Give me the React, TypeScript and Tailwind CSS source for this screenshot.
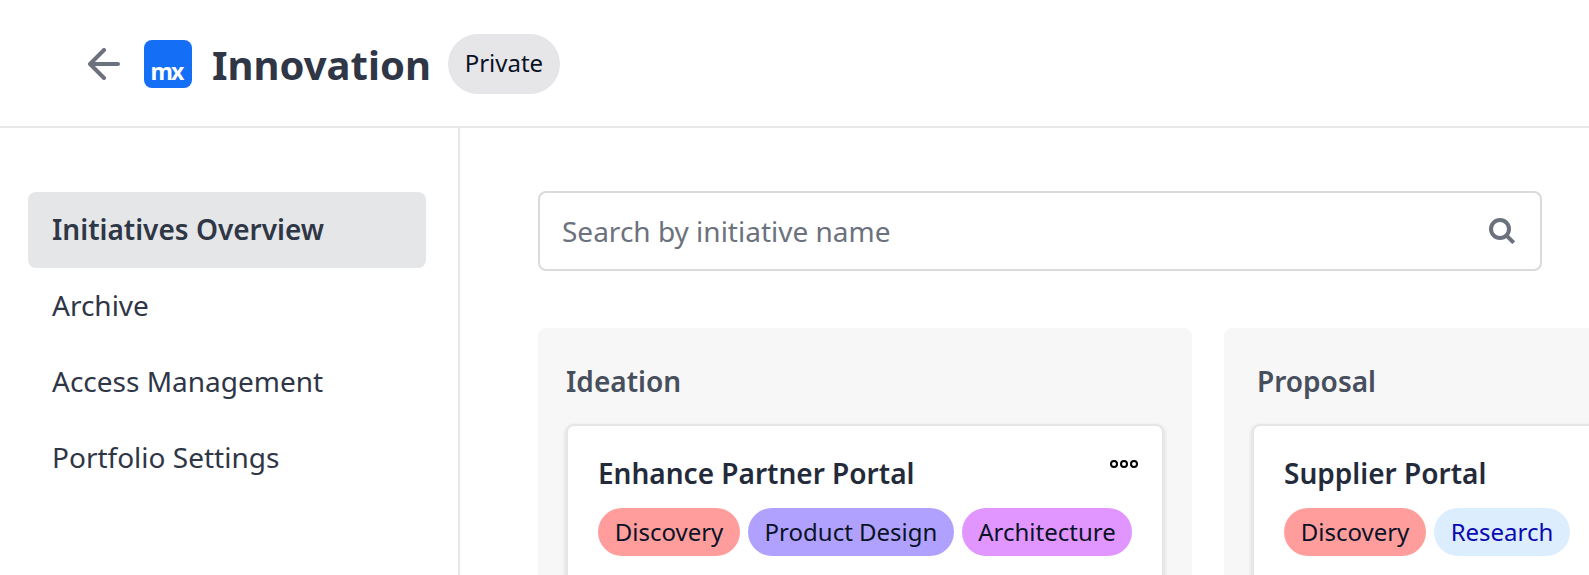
const navItems = ["Initiatives Overview", "Archive", "Access Management", "Portfolio Settings"];

type Tag = { label: string; className: string };

const columns: { name: string; headingClass: string; card: string; menu: boolean; tags: Tag[] }[] = [
  {
    name: "Ideation",
    headingClass: "",
    card: "Enhance Partner Portal",
    menu: true,
    tags: [
      { label: "Discovery", className: "w-[142px] bg-[#ff9d9d] text-[#0a1325]" },
      { label: "Product Design", className: "w-[206px] bg-[#b1a1ff] text-[#0a1325]" },
      { label: "Architecture", className: "w-[170px] bg-[#e195ff] text-[#0a1325]" },
    ],
  },
  {
    name: "Proposal",
    headingClass: "pl-[5px]",
    card: "Supplier Portal",
    menu: false,
    tags: [
      { label: "Discovery", className: "w-[142px] bg-[#ff9d9d] text-[#0a1325]" },
      { label: "Research", className: "w-[136px] bg-[#dcedfe] text-[#0a0ab0]" },
    ],
  },
];

function BackArrow() {
  return (
    <svg width="32" height="32" viewBox="0 0 32 32" fill="none" stroke="#6c717e" strokeWidth="4" strokeLinecap="round" strokeLinejoin="round">
      <path d="M30 16H2M16 2L2 16L16 30" />
    </svg>
  );
}

function SearchIcon() {
  return (
    <svg width="26" height="26" viewBox="0 0 26 26" fill="none" stroke="#6c717e" strokeWidth="4">
      <circle cx="11" cy="11" r="9" />
      <path d="M17.3 17.3L24.7 24.7" />
    </svg>
  );
}

function MoreIcon() {
  return (
    <svg width="28" height="8" viewBox="0 0 28 8" fill="none" stroke="#000" strokeWidth="2">
      <circle cx="4" cy="4" r="3" />
      <circle cx="14" cy="4" r="3" />
      <circle cx="24" cy="4" r="3" />
    </svg>
  );
}

export default function App() {
  return (
    <div className="flex h-[575px] w-full flex-col overflow-hidden bg-white font-['Noto_Sans',sans-serif] text-[28px] text-[#2f3646]">
      <header className="flex h-32 shrink-0 items-center border-b-2 border-[#e6e7e8] pl-[88px] pt-0.5">
        <BackArrow />
        <div className="ml-6 flex size-12 items-end justify-center rounded-lg bg-[#146ff6] pr-[3px] pb-1.5 text-white">
          <span className="text-[23px] leading-[22px] font-bold tracking-[-1.8px]">mx</span>
        </div>
        <h1 className="ml-5 pt-0.5 text-[40px] leading-[56px] font-bold">Innovation</h1>
        <span className="ml-[17px] flex h-[60px] w-28 items-center justify-center rounded-full bg-[#e6e6e8] pb-0.5 text-2xl text-[#0a1325]">
          Private
        </span>
      </header>
      <div className="flex min-h-0 flex-1">
        <nav className="w-[460px] shrink-0 border-r-2 border-[#e6e7e8] pt-16 pr-8 pl-7">
          {navItems.map((item, i) => (
            <div
              key={item}
              className={
                i === 0
                  ? "flex h-[76px] items-center rounded-lg bg-[#e5e6e8] px-6 pb-0.5 font-semibold"
                  : "flex h-[76px] items-center px-6 pb-0.5"
              }
            >
              {item}
            </div>
          ))}
        </nav>
        <main className="w-[1129px] shrink-0 overflow-hidden pt-[63px] pl-[78px]">
          <div className="flex h-20 w-[1004px] items-center justify-between rounded-lg border-2 border-[#d9dadb] pr-[25px] pl-[22px] text-[#6c717e]">
            <span>Search by initiative name</span>
            <SearchIcon />
          </div>
          <div className="mt-[57px] flex gap-8">
            {columns.map((col) => (
              <section key={col.name} className="h-[400px] w-[654px] shrink-0 rounded-lg bg-[#f7f7f7] px-7 pt-8">
                <h2 className={`h-16 text-[28px] leading-[42px] font-semibold text-[#474e5c] ${col.headingClass}`}>{col.name}</h2>
                <article className="h-[300px] w-[598px] rounded-lg border-2 border-[#e6e6e6] bg-white px-[30px] pt-[26px] shadow-[0_2px_4px_rgba(0,0,0,0.16)]">
                  <div className="flex items-start justify-between">
                    <h3 className="h-14 text-[28px] leading-[42px] font-semibold text-[#232a3a]">{col.card}</h3>
                    {col.menu && (
                      <button aria-label="More options" className="-mr-1.5 flex h-4 items-end">
                        <MoreIcon />
                      </button>
                    )}
                  </div>
                  <div className="flex gap-2">
                    {col.tags.map((tag) => (
                      <span
                        key={tag.label}
                        className={`flex h-12 shrink-0 items-center justify-center rounded-full text-2xl whitespace-nowrap ${tag.className}`}
                      >
                        {tag.label}
                      </span>
                    ))}
                  </div>
                </article>
              </section>
            ))}
          </div>
        </main>
      </div>
    </div>
  );
}
